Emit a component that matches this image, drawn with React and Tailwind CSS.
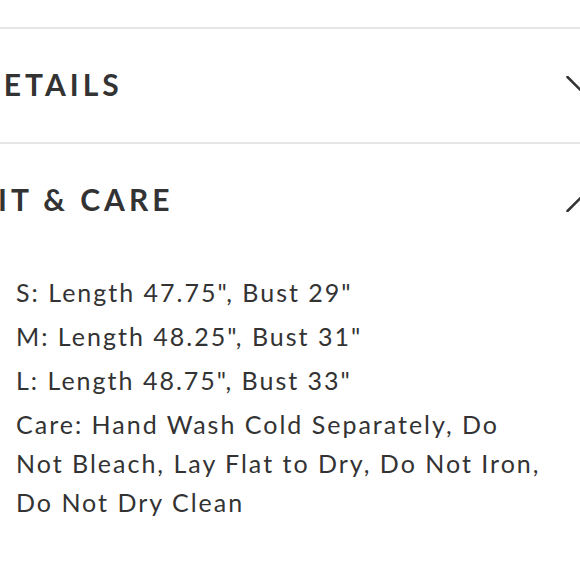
export default function App() {
  const font = { fontFamily: "Lato, 'Noto Sans', sans-serif" };
  return (
    <div className="w-[580px] h-[580px] overflow-hidden bg-white" style={font}>
      <div className="w-[619px] -ml-[23px] pt-[27px]">
        <div className="h-[2px] bg-[#e6e6e6]" />
        <div className="h-[113px] flex items-center justify-between">
          <span className="text-[30px] leading-none font-bold tracking-[4px] text-[#333] -mt-[4px]">DETAILS</span>
          <svg className="-mt-[4px]" width="30" height="16" viewBox="0 0 30 16" fill="none" stroke="#333" strokeWidth="2.5" strokeLinecap="round">
            <path d="M1.5 1 L15.5 15 L29.5 1" />
          </svg>
        </div>
        <div className="h-[2px] bg-[#e6e6e6]" />
        <div className="h-[113px] flex items-center justify-between">
          <span className="text-[30px] leading-none font-bold tracking-[4px] text-[#333] -mt-[4px]">FIT &amp; CARE</span>
          <svg className="mt-[6px]" width="30" height="16" viewBox="0 0 30 16" fill="none" stroke="#333" strokeWidth="2.5" strokeLinecap="round">
            <path d="M1.5 15 L15.5 1 L29.5 15" />
          </svg>
        </div>
        <div className="pl-[39px] pt-[16px] flex flex-col gap-[5px] text-[25px] leading-[39px] tracking-[2px] text-[#333]">
          <p>S: Length 47.75", Bust 29"</p>
          <p>M: Length 48.25", Bust 31"</p>
          <p>L: Length 48.75", Bust 33"</p>
          <p className="w-[535px]">Care: Hand Wash Cold Separately, Do Not Bleach, Lay Flat to Dry, Do Not Iron, Do Not Dry Clean</p>
        </div>
      </div>
    </div>
  );
}
